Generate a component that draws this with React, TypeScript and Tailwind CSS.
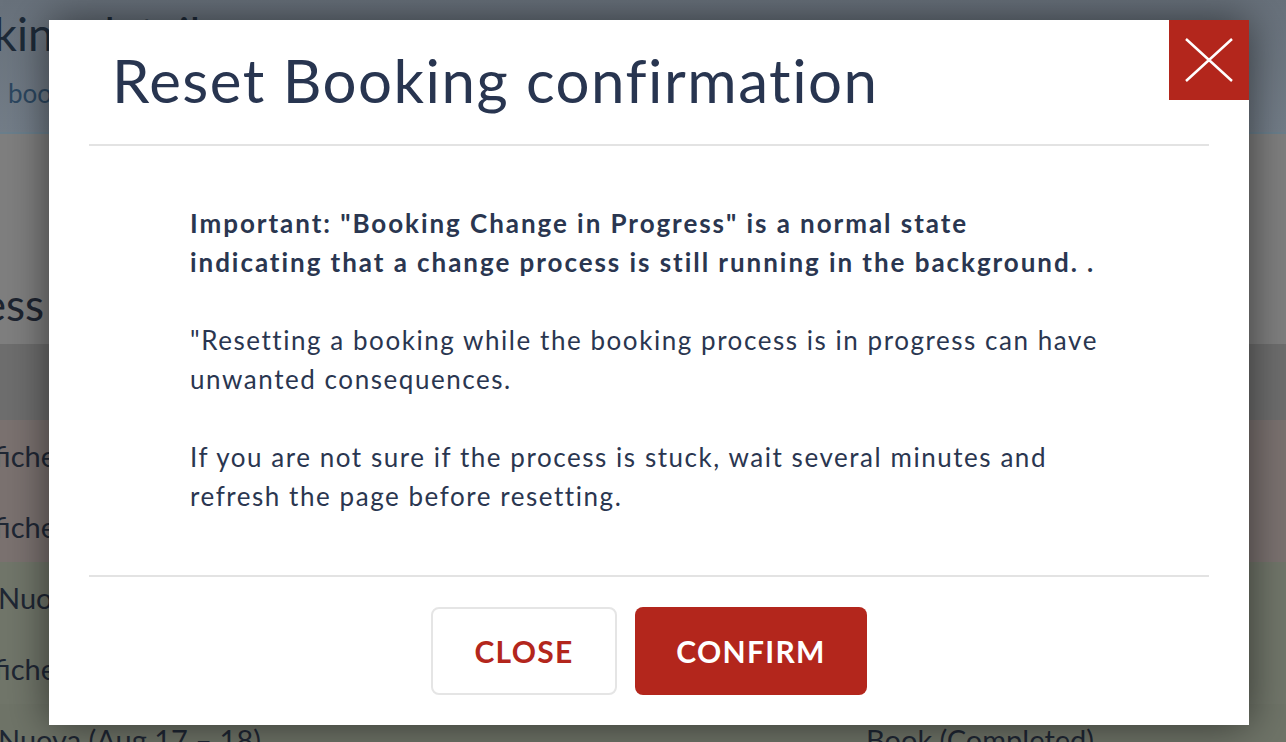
import React from "react";

const font = { fontFamily: "Lato, 'Noto Sans', sans-serif" };

function BgRow({ text, bg, shift, right }: { text: string; bg: string; shift: string; right?: string }) {
  return (
    <div className={`flex h-[71px] shrink-0 items-center ${bg}`}>
      <div className="w-[866px] shrink-0">
        <span className={`block whitespace-nowrap text-[29px] text-[#1f2734] ${shift}`}>{text}</span>
      </div>
      {right ? <span className="whitespace-nowrap text-[29px] text-[#1f2734]">{right}</span> : null}
    </div>
  );
}

export default function App() {
  return (
    <div className="relative h-[742px] w-[1286px] overflow-hidden" style={font}>
      {/* background page (already dimmed) */}
      <div className="flex h-full flex-col">
        <div className="h-[134px] shrink-0 border-b-2 border-[#6b7f8c] bg-gradient-to-b from-[#68717b] to-[#737d88]">
          <div className="ml-[-88px] pt-[6px] whitespace-nowrap text-[46px] leading-[56px] text-[#1d2a38]">Booking details</div>
          <div className="ml-[8px] pt-[12px] text-[26px] text-[#2c4760]">bookings</div>
        </div>
        <div className="flex h-[210px] shrink-0 items-end bg-[#7f7f7f] pb-[14px]">
          <div className="ml-[-169px] whitespace-nowrap text-[44px] leading-[52px] text-[#1d2430]">In Progress</div>
        </div>
        <div className="h-[76px] shrink-0 bg-[#6e6e6e]" />
        <BgRow text="Modifiche (Aug 17 – 18)" bg="bg-[#7b7270]" shift="ml-[-72px]" />
        <BgRow text="Modifiche (Aug 17 – 18)" bg="bg-[#7b7270]" shift="ml-[-72px]" />
        <BgRow text="Nuova (Aug 17 – 18)" bg="bg-[#71766a]" shift="ml-[-2px]" />
        <BgRow text="Modifiche (Aug 17 – 18)" bg="bg-[#71766a]" shift="ml-[-72px]" />
        <BgRow text="Nuova (Aug 17 – 18)" bg="bg-[#6f7468]" shift="ml-[-2px]" right="Book (Completed)" />
      </div>

      {/* modal overlay */}
      <div className="absolute left-[49px] top-[20px] flex h-[705px] w-[1200px] flex-col bg-white shadow-[0_0_40px_rgba(0,0,0,0.55)]">
        <div className="relative h-[124px] shrink-0 pl-[63px] pt-[24px]">
          <h1 className="text-[60px] leading-[72px] tracking-[1.5px] text-[#283550]">Reset Booking confirmation</h1>
          <button className="absolute right-0 top-0 flex h-[80px] w-[80px] items-center justify-center bg-[#b3261c]">
            <svg width="48" height="44" viewBox="0 0 48 44">
              <path d="M1 1 L47 43 M47 1 L1 43" stroke="white" strokeWidth="2.5" />
            </svg>
          </button>
        </div>
        <div className="mx-[40px] border-t-2 border-[#e3e3e3]" />
        <div className="flex-1 pl-[141px] pt-[58px] text-[26px] leading-[39px] text-[#2a3650]">
          <p className="font-bold tracking-[1.95px]">
            Important: "Booking Change in Progress" is a normal state
            <br />
            indicating that a change process is still running in the background. .
          </p>
          <p className="mt-[39px] tracking-[1.55px]">
            "Resetting a booking while the booking process is in progress can have
            <br />
            unwanted consequences.
          </p>
          <p className="mt-[39px] tracking-[1.55px]">
            If you are not sure if the process is stuck, wait several minutes and
            <br />
            refresh the page before resetting.
          </p>
        </div>
        <div className="mx-[40px] border-t-2 border-[#e3e3e3]" />
        <div className="flex justify-center gap-[18px] pb-[30px] pt-[30px]">
          <button className="flex h-[88px] w-[186px] items-center justify-center rounded-[8px] border-2 border-[#e5e5e5] bg-white text-[30px] font-bold tracking-[1.3px] text-[#b3261c]">
            CLOSE
          </button>
          <button className="flex h-[88px] w-[232px] items-center justify-center rounded-[8px] bg-[#b3261c] text-[30px] font-bold tracking-[1.3px] text-white">
            CONFIRM
          </button>
        </div>
      </div>
    </div>
  );
}
